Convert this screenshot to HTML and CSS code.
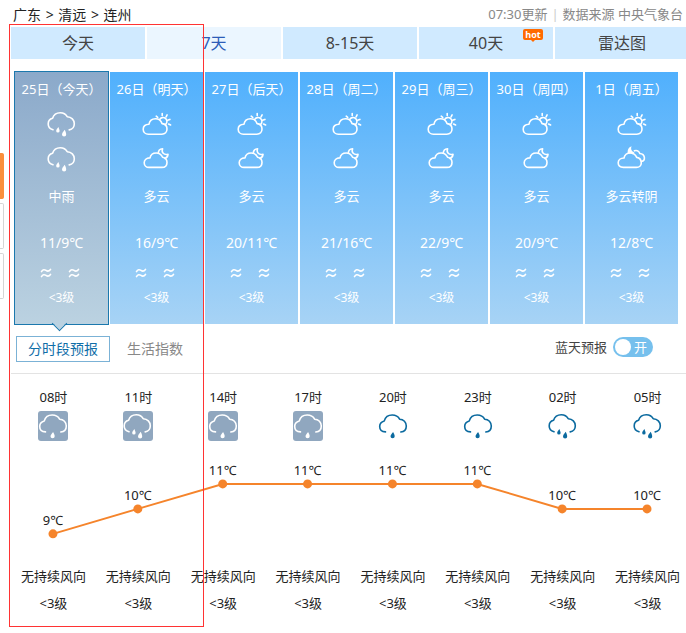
FILE: index.html
```html
<!DOCTYPE html>
<html lang="zh-CN">
<head>
  <meta charset="UTF-8">
  <meta name="viewport" content="width=device-width, initial-scale=1.0">
  <title>连州天气预报</title>
  <link rel="stylesheet" href="styles.css">
</head>
<body>
  <!-- 天气图标 -->
  <svg class="sprite" aria-hidden="true">
    <symbol id="rain" viewBox="0 0 30 30">
      <path class="line" d="M6 20.8C2.6 19.8 1.2 17.6 1.2 15C1.2 12 3 9.9 5.6 9.3C6.6 5.8 9.6 3.7 13.3 3.7C16.5 3.7 18.9 5.2 20.2 7.7C24.4 7.9 27.3 11 27.3 14.8C27.3 18 25.4 20.4 22.2 20.9"/>
      <path class="drop" d="M11.4 18C10 19.6 9.2 20.8 9.2 21.9A1.7 1.7 0 0 0 12.6 21.9C12.6 20.8 12 19.6 11.4 18Z"/>
      <path class="drop" d="M17.7 20.8C16.2 22.8 15 24.2 15 25.5A2.1 2.1 0 0 0 19.2 25.5C19.2 24.2 18.6 22.6 17.7 20.8Z"/>
    </symbol>
    <symbol id="light-rain" viewBox="0 0 30 30">
      <path class="line" d="M7.5 20.9C3.5 20.8 1.7 18.2 1.7 15.5C1.7 12.6 3.6 10.6 6.3 9.9C7.3 6.2 10.3 4 14.2 4C17.6 4 20.3 5.6 21.6 8.2C25.6 8.2 28.3 11.3 28.3 15C28.3 18.3 26.3 20.7 22.8 21"/>
      <path class="drop" d="M15.1 20.9C13.6 22.8 12.5 24.1 12.5 25.2A2.1 2.1 0 0 0 16.7 25.2C16.7 24 16 22.6 15.1 20.9Z"/>
    </symbol>
    <symbol id="cloud-sun" viewBox="0 0 30 30">
      <path class="line" d="M6.4 25.2H19.8C23 25.2 25 22.8 25 20C25 17 22.9 14.9 20.1 14.6C19 11.6 16.6 9.8 13.5 9.8C10 9.8 7.5 12.1 7 15.2C3.6 15.3 1.2 17.3 1.2 20.2C1.2 23.1 3.4 25.2 6.4 25.2Z"/>
      <path class="line" d="M17.6 10.6A3.9 3.9 0 1 1 23.6 15.4M20.2 4.5V6.4M14.2 7.2L15.7 8.4M25.1 5.9L24.1 7.8M27.9 10.4L26.2 11.1M26.6 15.1L28.6 16"/>
    </symbol>
    <symbol id="cloud-moon" viewBox="0 0 30 30">
      <path class="line" d="M7 23.4H19.8C23.2 23.4 25 21.2 25 18.4C25 15.9 23.4 13.9 20.6 13.3C19.4 10.5 17 9 14.2 9C11 9 8.5 10.9 8 13.9C4.5 13.7 2.2 16.1 2.2 18.7C2.2 21.5 4.4 23.4 7 23.4Z"/>
      <path class="line" d="M16.3 9.2C16.3 6.7 17.9 5.1 20.6 4.8C19.1 8.4 21.9 11.4 26 10.3C25.8 12.4 24.7 13.8 23 14.5"/>
    </symbol>
    <symbol id="overcast-night" viewBox="0 0 30 30">
      <path class="line" d="M6.4 23.4H19.4C22.2 23.4 24.3 21.6 24.3 18.9C24.3 16 22.2 13.9 19.7 13.4C18.5 10.6 16.2 9 13.4 9C10 9 7.5 11.2 7 14C3.5 14 1.2 16.1 1.2 18.8C1.2 21.5 3.3 23.4 6.4 23.4Z"/>
      <path class="line" d="M17.4 6.8C20.4 5.6 22.3 7.8 22.8 9.5C28.4 9.9 28.8 16.9 24.4 17.5"/>
      <path class="drop" d="M14.6 2.2C11.6 3.3 10.1 6 10.9 9.4C12.8 9 14.4 9.4 16 10.6L17.4 8.4C14.6 7.4 13.4 5 14.6 2.2Z"/>
    </symbol>
    <symbol id="wind" viewBox="0 0 12 12">
      <path class="line" d="M1.5 4.6C2.8 2.4 4.4 2.3 6 3.4S9 4.4 10.5 2.4M1.5 9.6C2.8 7.4 4.4 7.3 6 8.4S9 9.4 10.5 7.4"/>
    </symbol>
  </svg>

  <div class="side">
    <span class="side-item on"></span>
    <span class="side-item"></span>
    <span class="side-item"></span>
  </div>

  <div class="page">
    <header class="top">
      <div class="crumbs"><a href="#">广东</a> <span>&gt;</span> <a href="#">清远</a> <span>&gt;</span> <a href="#">连州</a></div>
      <div class="source">07:30更新<span class="bar">|</span>数据来源 中央气象台</div>
    </header>

    <nav class="tabs">
      <a href="#">今天</a>
      <a href="#" class="on">7天</a>
      <a href="#">8-15天</a>
      <a href="#">40天<span class="hot">hot</span></a>
      <a href="#">雷达图</a>
    </nav>

    <ul class="days">
      <li class="day on">
        <h2>25日（今天）</h2>
        <svg class="icon"><use href="#rain"/></svg>
        <svg class="icon"><use href="#rain"/></svg>
        <p class="wea">中雨</p>
        <p class="tem">11/9℃</p>
        <p class="win"><svg><use href="#wind"/></svg><svg><use href="#wind"/></svg></p>
        <p class="level">&lt;3级</p>
      </li>
      <li class="day">
        <h2>26日（明天）</h2>
        <svg class="icon"><use href="#cloud-sun"/></svg>
        <svg class="icon"><use href="#cloud-moon"/></svg>
        <p class="wea">多云</p>
        <p class="tem">16/9℃</p>
        <p class="win"><svg><use href="#wind"/></svg><svg><use href="#wind"/></svg></p>
        <p class="level">&lt;3级</p>
      </li>
      <li class="day">
        <h2>27日（后天）</h2>
        <svg class="icon"><use href="#cloud-sun"/></svg>
        <svg class="icon"><use href="#cloud-moon"/></svg>
        <p class="wea">多云</p>
        <p class="tem">20/11℃</p>
        <p class="win"><svg><use href="#wind"/></svg><svg><use href="#wind"/></svg></p>
        <p class="level">&lt;3级</p>
      </li>
      <li class="day">
        <h2>28日（周二）</h2>
        <svg class="icon"><use href="#cloud-sun"/></svg>
        <svg class="icon"><use href="#cloud-moon"/></svg>
        <p class="wea">多云</p>
        <p class="tem">21/16℃</p>
        <p class="win"><svg><use href="#wind"/></svg><svg><use href="#wind"/></svg></p>
        <p class="level">&lt;3级</p>
      </li>
      <li class="day">
        <h2>29日（周三）</h2>
        <svg class="icon"><use href="#cloud-sun"/></svg>
        <svg class="icon"><use href="#cloud-moon"/></svg>
        <p class="wea">多云</p>
        <p class="tem">22/9℃</p>
        <p class="win"><svg><use href="#wind"/></svg><svg><use href="#wind"/></svg></p>
        <p class="level">&lt;3级</p>
      </li>
      <li class="day">
        <h2>30日（周四）</h2>
        <svg class="icon"><use href="#cloud-sun"/></svg>
        <svg class="icon"><use href="#cloud-moon"/></svg>
        <p class="wea">多云</p>
        <p class="tem">20/9℃</p>
        <p class="win"><svg><use href="#wind"/></svg><svg><use href="#wind"/></svg></p>
        <p class="level">&lt;3级</p>
      </li>
      <li class="day">
        <h2>1日（周五）</h2>
        <svg class="icon"><use href="#cloud-sun"/></svg>
        <svg class="icon"><use href="#overcast-night"/></svg>
        <p class="wea">多云转阴</p>
        <p class="tem">12/8℃</p>
        <p class="win"><svg><use href="#wind"/></svg><svg><use href="#wind"/></svg></p>
        <p class="level">&lt;3级</p>
      </li>
    </ul>

    <div class="subbar">
      <button type="button" class="sub on">分时段预报</button>
      <button type="button" class="sub">生活指数</button>
      <label class="switch" for="bluesky">
        蓝天预报
        <span class="switch-box">
          <input type="checkbox" id="bluesky" checked>
          <span class="switch-text">开</span>
        </span>
      </label>
    </div>

    <section class="hourly">
      <div class="row hours">
        <div>08时<svg class="icon tile"><use href="#light-rain"/></svg></div>
        <div>11时<svg class="icon tile"><use href="#rain"/></svg></div>
        <div>14时<svg class="icon tile"><use href="#light-rain"/></svg></div>
        <div>17时<svg class="icon tile"><use href="#light-rain"/></svg></div>
        <div>20时<svg class="icon night"><use href="#light-rain"/></svg></div>
        <div>23时<svg class="icon night"><use href="#light-rain"/></svg></div>
        <div>02时<svg class="icon night"><use href="#rain"/></svg></div>
        <div>05时<svg class="icon night"><use href="#rain"/></svg></div>
      </div>

      <!-- 温度曲线 -->
      <svg class="chart" viewBox="0 0 680 120">
        <polyline points="42,93 127,68 212,43 297,43 382,43 467,43 552,68 637,68"/>
        <circle cx="42" cy="93" r="4.5"/>
        <circle cx="127" cy="68" r="4.5"/>
        <circle cx="212" cy="43" r="4.5"/>
        <circle cx="297" cy="43" r="4.5"/>
        <circle cx="382" cy="43" r="4.5"/>
        <circle cx="467" cy="43" r="4.5"/>
        <circle cx="552" cy="68" r="4.5"/>
        <circle cx="637" cy="68" r="4.5"/>
        <text x="42" y="84">9℃</text>
        <text x="127" y="59">10℃</text>
        <text x="212" y="34">11℃</text>
        <text x="297" y="34">11℃</text>
        <text x="382" y="34">11℃</text>
        <text x="467" y="34">11℃</text>
        <text x="552" y="59">10℃</text>
        <text x="637" y="59">10℃</text>
      </svg>

      <div class="row winds">
        <div>无持续风向<span>&lt;3级</span></div>
        <div>无持续风向<span>&lt;3级</span></div>
        <div>无持续风向<span>&lt;3级</span></div>
        <div>无持续风向<span>&lt;3级</span></div>
        <div>无持续风向<span>&lt;3级</span></div>
        <div>无持续风向<span>&lt;3级</span></div>
        <div>无持续风向<span>&lt;3级</span></div>
        <div>无持续风向<span>&lt;3级</span></div>
      </div>
    </section>
  </div>

  <div class="mark"></div>
</body>
</html>
```

FILE: styles.css
```css
* {
  box-sizing: border-box;
}
body {
  margin: 0;
  position: relative;
  overflow-x: hidden;
  background-color: #fff;
  color: #222;
  font-family: "Noto Sans", "Noto Sans CJK SC", sans-serif;
  font-size: 13px;
  line-height: 20px;
}
a {
  color: inherit;
  text-decoration: none;
}
h2, p, ul {
  margin: 0;
  padding: 0;
}
.sprite {
  display: none;
}
.line {
  fill: none;
  stroke: currentColor;
  stroke-width: 1.6;
  stroke-linecap: round;
  stroke-linejoin: round;
}
.drop {
  fill: currentColor;
}
.page {
  padding: 0 0 20px 11px;
}

/* 顶部 */
.top {
  display: flex;
  justify-content: space-between;
  height: 27px;
  padding: 5px 3px 0 2px;
}
.crumbs {
  font-size: 14px;
}
.crumbs span {
  margin: 0 1px;
}
.source {
  color: #888;
  line-height: 18px;
}
.bar {
  margin: 0 4px;
  color: #ccc;
}

/* 导航 */
.tabs {
  display: grid;
  grid-template-columns: repeat(5, 1fr);
  gap: 2px;
  margin-right: -3px;
}
.tabs a {
  position: relative;
  background-color: #d0eaff;
  color: #444;
  font-size: 16px;
  line-height: 32px;
  text-align: center;
}
.tabs a.on {
  background-color: #ebf6ff;
  color: #2d5cb8;
}
.hot {
  position: absolute;
  top: 2px;
  right: 10px;
  width: 20px;
  border-radius: 2px;
  background-color: #ff6a00;
  color: #fff;
  font: bold 9px/11px "Open Sans", sans-serif;
}
.hot::after {
  content: "";
  position: absolute;
  top: 11px;
  left: 8px;
  border: 2px solid transparent;
  border-top-color: #ff6a00;
}

/* 七天预报 */
.days {
  display: grid;
  grid-template-columns: repeat(7, 1fr);
  gap: 2px;
  margin: 13px 8px 0 4px;
  list-style: none;
}
.day {
  position: relative;
  padding: 7px 0 16px;
  background: linear-gradient(#50b0fd, #a7d3f5);
  color: #fff;
  text-align: center;
}
.day.on {
  background: linear-gradient(#8ba9ca, #bbd2e1);
  box-shadow: 0 0 0 1px #1b78ad;
}
.day.on::after {
  content: "";
  position: absolute;
  bottom: -5px;
  left: 39px;
  width: 10px;
  height: 10px;
  border: solid #1b78ad;
  border-width: 0 1px 1px 0;
  background: linear-gradient(135deg, transparent 50%, #bbd2e1 50%);
  transform: rotate(45deg);
}
.day h2 {
  margin-bottom: 10px;
  font-size: 13px;
  font-weight: normal;
  white-space: nowrap;
}
.icon {
  display: block;
  width: 30px;
  height: 30px;
  margin: 0 auto;
}
.day .icon + .icon {
  margin-top: 5px;
}
.wea {
  margin-top: 12px;
}
.tem {
  margin-top: 27px;
  font-size: 14px;
}
.win {
  display: flex;
  justify-content: center;
  align-items: center;
  gap: 16px;
  height: 20px;
  margin-top: 10px;
  padding-right: 3px;
}
.win svg {
  width: 12px;
  height: 12px;
}
.level {
  margin-top: 5px;
  font-size: 12px;
}

/* 分时段 */
.subbar {
  display: flex;
  align-items: center;
  height: 50px;
  padding: 0 33px 0 5px;
  border-bottom: 1px solid #e3e3e3;
}
.sub {
  height: 26px;
  padding: 0 11px;
  border: 1px solid transparent;
  background: none;
  color: #888;
  font: inherit;
  font-size: 14px;
  line-height: 24px;
}
.sub.on {
  border-color: #7bb2d6;
  color: #0f6ea8;
}
.sub + .sub {
  margin-left: 5px;
}
.switch {
  display: flex;
  align-items: center;
  gap: 6px;
  margin-left: auto;
  padding-bottom: 4px;
  color: #444;
}
.switch-box {
  display: grid;
}
.switch-box input,
.switch-text {
  grid-area: 1 / 1;
}
.switch-box input {
  appearance: none;
  width: 40px;
  height: 20px;
  margin: 0;
  padding: 2px;
  border-radius: 10px;
  background-color: #76c0ed;
}
.switch-box input::before {
  content: "";
  display: block;
  width: 16px;
  height: 16px;
  border-radius: 50%;
  background-color: #fff;
}
.switch-text {
  padding-left: 21px;
  color: #fff;
  pointer-events: none;
}
.hourly {
  margin-right: -4px;
  padding-top: 13px;
}
.row {
  display: grid;
  grid-template-columns: repeat(8, 1fr);
  text-align: center;
}
.hours .icon {
  margin-top: 4px;
}
.tile {
  border-radius: 3px;
  background-color: #90a7bf;
  color: #fff;
}
.night {
  color: #0b6a9f;
}
.chart {
  display: block;
  width: 100%;
}
.chart polyline {
  fill: none;
  stroke: #f5842b;
  stroke-width: 2;
}
.chart circle {
  fill: #f5842b;
}
.chart text {
  fill: #222;
  text-anchor: middle;
}
.winds {
  padding-top: 5px;
}
.winds span {
  display: block;
  margin-top: 7px;
}

/* 左侧浮动条 */
.side {
  position: absolute;
  top: 153px;
  left: 0;
}
.side-item {
  display: block;
  width: 4px;
  height: 46px;
  margin-bottom: 4px;
  border: 1px solid #d5d5d5;
  border-left: 0;
  border-radius: 0 2px 2px 0;
}
.side-item.on {
  border-color: #fa8f3c;
  background-color: #fa8f3c;
}

/* 红色标注框 */
.mark {
  position: absolute;
  top: 24px;
  left: 9px;
  width: 195px;
  height: 603px;
  border: 1px solid #f33;
  pointer-events: none;
}
```
